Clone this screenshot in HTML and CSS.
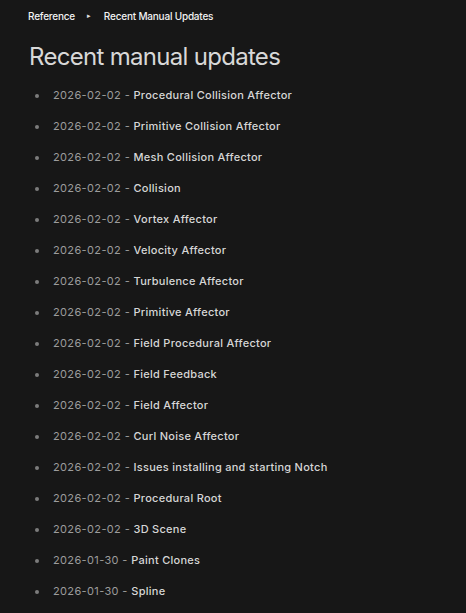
FILE: index.html
```html
<!DOCTYPE html>
<html lang="en">
<head>
<meta charset="utf-8">
<title>Recent manual updates</title>
<link rel="stylesheet" href="styles.css">
</head>
<body>
<main class="page">
  <nav class="crumbs">
    <a class="crumb" href="#">Reference</a>
    <span class="sep">&#9656;</span>
    <a class="crumb" href="#">Recent Manual Updates</a>
  </nav>
  <h1 class="title">Recent manual updates</h1>
  <ul class="updates">
    <li><span class="date">2026-02-02 - </span><a href="#">Procedural Collision Affector</a></li>
    <li><span class="date">2026-02-02 - </span><a href="#">Primitive Collision Affector</a></li>
    <li><span class="date">2026-02-02 - </span><a href="#">Mesh Collision Affector</a></li>
    <li><span class="date">2026-02-02 - </span><a href="#">Collision</a></li>
    <li><span class="date">2026-02-02 - </span><a href="#">Vortex Affector</a></li>
    <li><span class="date">2026-02-02 - </span><a href="#">Velocity Affector</a></li>
    <li><span class="date">2026-02-02 - </span><a href="#">Turbulence Affector</a></li>
    <li><span class="date">2026-02-02 - </span><a href="#">Primitive Affector</a></li>
    <li><span class="date">2026-02-02 - </span><a href="#">Field Procedural Affector</a></li>
    <li><span class="date">2026-02-02 - </span><a href="#">Field Feedback</a></li>
    <li><span class="date">2026-02-02 - </span><a href="#">Field Affector</a></li>
    <li><span class="date">2026-02-02 - </span><a href="#">Curl Noise Affector</a></li>
    <li><span class="date">2026-02-02 - </span><a href="#">Issues installing and starting Notch</a></li>
    <li><span class="date">2026-02-02 - </span><a href="#">Procedural Root</a></li>
    <li><span class="date">2026-02-02 - </span><a href="#">3D Scene</a></li>
    <li><span class="date">2026-01-30 - </span><a href="#">Paint Clones</a></li>
    <li><span class="date">2026-01-30 - </span><a href="#">Spline</a></li>
  </ul>
</main>
</body>
</html>
```

FILE: styles.css
```css
html, body {
  margin: 0;
  padding: 0;
  background: #171717;
}
body {
  font-family: Inter, "Noto Sans", sans-serif;
  color: #d4d4d4;
  overflow: hidden;
}
.page {
  padding: 9px 28px 0 28px;
}
.crumbs {
  display: flex;
  align-items: center;
  font-size: 10px;
  font-weight: 500;
  line-height: 14px;
  letter-spacing: -0.2px;
}
.crumb {
  color: #f2f2f2;
  text-decoration: none;
}
.sep {
  font-size: 7px;
  color: #e0e0e0;
  margin: 0 13px 0 12px;
}
.title {
  margin: 19px 0 0 1px;
  font-size: 24px;
  font-weight: 400;
  line-height: 30px;
  color: #d8d8d8;
  letter-spacing: -0.7px;
}
.updates {
  list-style: none;
  margin: 16px 0 0 0;
  padding: 0 0 0 7px;
  font-size: 11px;
  line-height: 15px;
}
.updates li {
  display: flex;
  align-items: center;
  margin-bottom: 16px;
  white-space: pre;
}
.updates li::before {
  content: "";
  width: 4px;
  height: 4px;
  border-radius: 50%;
  background: #7c7c7c;
  margin: 1px 14px 0 0;
  flex: none;
}
.date {
  color: #9c9c9c;
  font-weight: 400;
  letter-spacing: 0.36px;
}
.updates a {
  color: #d6d6d6;
  font-weight: 500;
  letter-spacing: 0.27px;
  text-decoration: none;
}
```
